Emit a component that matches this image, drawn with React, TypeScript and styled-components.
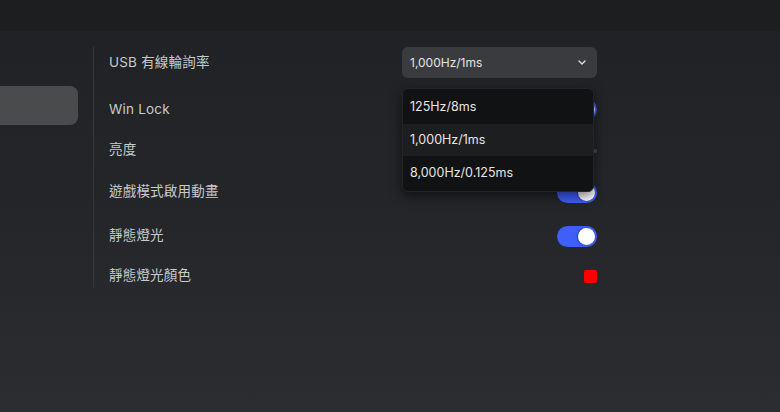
import styled, { createGlobalStyle } from 'styled-components';

const GlobalStyle = createGlobalStyle`
    html, body {
        margin: 0;
        padding: 0;
        background: #1d1e20;
    }
    body {
        font-family: Inter, "Noto Sans CJK TC", "Noto Sans", sans-serif;
        -webkit-font-smoothing: antialiased;
    }
`;

const Page = styled.div`
    width: 780px;
    height: 412px;
    display: flex;
    flex-direction: column;
    overflow: hidden;
`;

const TopBar = styled.div`
    height: 31px;
    flex-shrink: 0;
    background: #1d1e20;
`;

const Body = styled.div`
    flex: 1;
    display: flex;
    align-items: flex-start;
    background: linear-gradient(180deg, #202225 0%, #24262a 50%, #2b2d30 100%);
`;

const Sidebar = styled.nav`
    width: 78px;
    padding-top: 55px;
    display: flex;
    flex-direction: column;
`;

const SideItem = styled.div<{ active?: boolean }>`
    height: 39px;
    border-radius: 0 8px 8px 0;
    background: ${props => props.active ? '#4a4b4d' : 'transparent'};
`;

const Content = styled.section`
    margin: 16px 0 0 15px;
    padding: 0 0 4px 15px;
    border-left: 1px solid #36383b;
    width: 488px;
    display: flex;
    flex-direction: column;
    gap: 20px;
`;

const Row = styled.div<{ h: number }>`
    height: ${props => props.h}px;
    display: flex;
    align-items: center;
    justify-content: space-between;
`;

const Label = styled.span<{ cjk?: boolean }>`
    font-size: 13.5px;
    line-height: 16px;
    color: #c9cacb;
    letter-spacing: 0.2px;
    margin-top: ${props => props.cjk ? '-3px' : '-1px'};
`;

const SelectWrap = styled.div`
    position: relative;
    width: 195px;
`;

const SelectBox = styled.div`
    height: 31px;
    border-radius: 6px;
    background: #3a3b3e;
    display: flex;
    align-items: center;
    justify-content: space-between;
    padding: 0 11px 1px 8px;
    font-size: 12px;
    color: #e4e4e4;
    box-sizing: border-box;
`;

const Menu = styled.ul`
    position: absolute;
    top: 41px;
    left: 0;
    width: 192px;
    margin: 0;
    padding: 1px 0;
    list-style: none;
    background: #111213;
    border: 1px solid #242527;
    border-radius: 6px;
    box-shadow: 0 4px 12px rgba(0, 0, 0, 0.55);
    overflow: hidden;
    z-index: 10;
    box-sizing: border-box;
`;

const MenuItem = styled.li<{ h: number; hover?: boolean }>`
    height: ${props => props.h}px;
    display: flex;
    align-items: center;
    padding: 0 0 2px 7px;
    font-size: 12.5px;
    color: #e6e6e6;
    background: ${props => props.hover ? '#1d1e20' : 'transparent'};
    box-sizing: border-box;
`;

const Toggle = styled.div<{ on?: boolean }>`
    width: 40px;
    height: 21px;
    border-radius: 11px;
    background: ${props => props.on ? '#3e5ffa' : '#55575a'};
    display: flex;
    align-items: center;
    justify-content: ${props => props.on ? 'flex-end' : 'flex-start'};
    padding: 0 2px;
    box-sizing: border-box;
`;

const Knob = styled.div`
    width: 17px;
    height: 17px;
    border-radius: 50%;
    background: #ffffff;
    box-shadow: -1px 0 2px rgba(0, 0, 0, 0.35);
`;

const Slider = styled.div`
    width: 194px;
    height: 4px;
    border-radius: 2px;
    background: #4a4c4f;
`;

const Swatch = styled.div<{ color: string }>`
    width: 13px;
    height: 13px;
    border-radius: 2px;
    background: ${props => props.color};
`;

const Chevron = () => (
    <svg width="8" height="5" viewBox="0 0 8 5" fill="none">
        <path d="M1 1 L4 4 L7 1" stroke="#dcdcdc" strokeWidth="1.4" strokeLinecap="round" strokeLinejoin="round" />
    </svg>
);

const rates = ['125Hz/8ms', '1,000Hz/1ms', '8,000Hz/0.125ms'];

const App = () => {
    const current = '1,000Hz/1ms';

    return (
        <>
            <GlobalStyle />
            <Page>
                <TopBar />
                <Body>
                    <Sidebar>
                        <SideItem active />
                    </Sidebar>
                    <Content>
                        <Row h={31}>
                            <Label>USB 有線輪詢率</Label>
                            <SelectWrap>
                                <SelectBox>
                                    <span>{current}</span>
                                    <Chevron />
                                </SelectBox>
                                <Menu>
                                    {rates.map((rate, i) => (
                                        <MenuItem key={rate} h={i === 1 ? 32 : 34} hover={rate === current}>{rate}</MenuItem>
                                    ))}
                                </Menu>
                            </SelectWrap>
                        </Row>
                        <Row h={22}>
                            <Label>Win Lock</Label>
                            <Toggle on><Knob /></Toggle>
                        </Row>
                        <Row h={21}>
                            <Label cjk>亮度</Label>
                            <Slider />
                        </Row>
                        <Row h={22}>
                            <Label cjk>遊戲模式啟用動畫</Label>
                            <Toggle on><Knob /></Toggle>
                        </Row>
                        <Row h={27}>
                            <Label cjk>靜態燈光</Label>
                            <Toggle on><Knob /></Toggle>
                        </Row>
                        <Row h={13}>
                            <Label cjk>靜態燈光顏色</Label>
                            <Swatch color="#ff0000" />
                        </Row>
                    </Content>
                </Body>
            </Page>
        </>
    );
};

export default App;
